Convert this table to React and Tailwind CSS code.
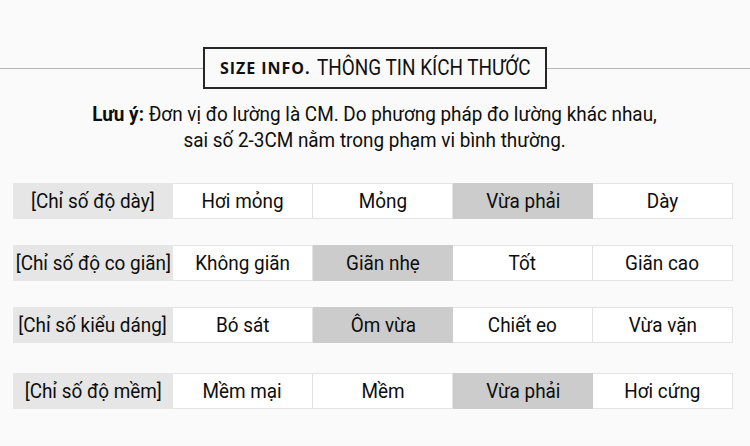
const rows = [
    { label: '[Chỉ số độ dày]', items: ['Hơi mỏng', 'Mỏng', 'Vừa phải', 'Dày'], active: 2, mt: 'mt-[30px]' },
    { label: '[Chỉ số độ co giãn]', items: ['Không giãn', 'Giãn nhẹ', 'Tốt', 'Giãn cao'], active: 1, mt: 'mt-[26px]' },
    { label: '[Chỉ số kiểu dáng]', items: ['Bó sát', 'Ôm vừa', 'Chiết eo', 'Vừa vặn'], active: 1, mt: 'mt-[26px]' },
    { label: '[Chỉ số độ mềm]', items: ['Mềm mại', 'Mềm', 'Vừa phải', 'Hơi cứng'], active: 2, mt: 'mt-[30px]' },
]

const condensed = { fontFamily: 'Roboto, "Liberation Sans", sans-serif' }

function Cell({ children, kind }) {
    // label = grey head cell, on = selected value, off = plain white cell
    const look =
        kind === 'label'
            ? 'w-[160px] bg-[#e6e6e6]'
            : kind === 'on'
                ? 'w-[140px] bg-[#cccccc]'
                : 'w-[140px] bg-white border-y border-r border-[#e3e3e3]'
    return (
        <div className={`${look} h-[36px] flex items-center justify-center overflow-visible`}>
            <span className="inline-block whitespace-nowrap text-[21px] leading-none text-[#0d0d0d] scale-x-[0.9]" style={condensed}>
                {children}
            </span>
        </div>
    )
}

export default function App() {
    return (
        <div className="w-[750px] h-[446px] overflow-hidden bg-[#fafafa]">
            {/* Title with rule across the page */}
            <div className="pt-[47px] flex items-center">
                <div className="flex-1 h-px mt-px bg-[#b4b4b4]" />
                <div className="w-[344px] h-[42px] border-2 border-[#262626] flex items-center pl-[15px] whitespace-nowrap">
                    <span className="text-[16px] font-bold tracking-[0.06em] text-[#111]" style={{ fontFamily: '"Open Sans", sans-serif' }}>
                        SIZE INFO.
                    </span>
                    <span className="inline-block ml-[7px] text-[22px] leading-none text-[#111] scale-x-[0.86] origin-left" style={condensed}>
                        THÔNG TIN KÍCH THƯỚC
                    </span>
                </div>
                <div className="flex-1 h-px mt-px bg-[#b4b4b4]" />
            </div>

            <div className="mt-[12px] flex justify-center">
                <p className="inline-block text-center text-[21px] leading-[26px] text-[#0d0d0d] scale-x-[0.9]" style={condensed}>
                    <span className="font-bold">Lưu ý:</span> Đơn vị đo lường là CM. Do phương pháp đo lường khác nhau,
                    <br />
                    sai số 2-3CM nằm trong phạm vi bình thường.
                </p>
            </div>

            <div className="pl-[13px]">
                {rows.map((r) => (
                    <div key={r.label} className={`${r.mt} flex`}>
                        <Cell kind="label">{r.label}</Cell>
                        {r.items.map((it, i) => (
                            <Cell key={it} kind={i === r.active ? 'on' : 'off'}>{it}</Cell>
                        ))}
                    </div>
                ))}
            </div>
        </div>
    )
}
